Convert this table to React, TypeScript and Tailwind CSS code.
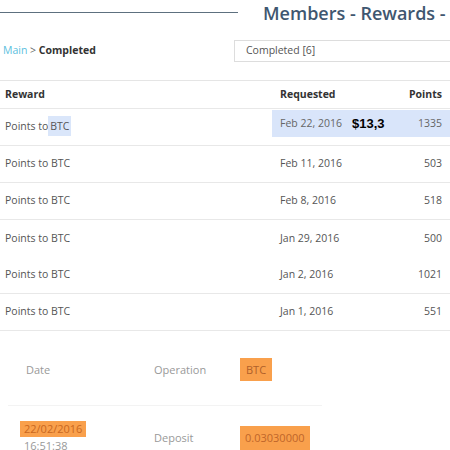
const rows = [
  { date: "Feb 22, 2016", points: "1335" },
  { date: "Feb 11, 2016", points: "503" },
  { date: "Feb 8, 2016", points: "518" },
  { date: "Jan 29, 2016", points: "500" },
  { date: "Jan 2, 2016", points: "1021" },
  { date: "Jan 1, 2016", points: "551" },
];

export default function App() {
  return (
    <div
      className="w-[450px] h-[450px] overflow-hidden bg-white text-[10.5px] text-[#555]"
      style={{ fontFamily: '"Open Sans", "Liberation Sans", sans-serif' }}
    >
      {/* Title bar */}
      <div className="flex items-center h-[25px]">
        <div className="w-[238px] h-px bg-[#5d707f] shrink-0" />
        <h1 className="ml-[25px] whitespace-nowrap text-[18px] font-semibold text-[#3f5770] leading-none">
          Members - Rewards - Completed
        </h1>
      </div>

      {/* Breadcrumb + filter */}
      <div className="flex items-center mt-[15px] h-[22px]">
        <div className="w-[234px] shrink-0 pl-[3px]">
          <span className="text-[#5bc0de]">Main</span>
          <span className="text-[#666]"> &gt; </span>
          <span className="font-bold text-[#333]">Completed</span>
        </div>
        <div className="flex-1 h-[22px] border border-[#ddd] border-r-0 flex items-center pl-[11px] text-[#555] whitespace-nowrap">
          Completed [6]
        </div>
      </div>

      {/* Rewards table */}
      <div className="mt-[18px] border-t border-[#e5e5e5]">
        <div className="flex items-center h-[28px] border-b border-[#e8e8e8] font-bold text-[#333]">
          <div className="flex-1 pl-[5px]">Reward</div>
          <div className="w-[118px] pl-[8px]">Requested</div>
          <div className="w-[60px] text-right pr-[8px]">Points</div>
        </div>
        {rows.map((r, i) => (
          <div
            key={i}
            className={
              "flex items-center h-[37px] " +
              (i === 3 ? "" : "border-b border-[#e8e8e8]")
            }
          >
            <div className="flex-1 pl-[5px]">
              Points to
              {i === 0 ? (
                <span className="bg-[#dae6fa] py-[3px] px-[2px]">BTC</span>
              ) : (
                " BTC"
              )}
            </div>
            {i === 0 ? (
              <div className="w-[178px] h-[27px] bg-[#d9e5fa] flex items-center self-start mt-px">
                <div className="w-[80px] pl-[8px] text-[#666]">{r.date}</div>
                <div
                  className="text-[13px] font-bold text-black"
                  style={{ fontFamily: '"Liberation Sans", Arial, sans-serif' }}
                >
                  $13,3
                </div>
                <div className="flex-1 text-right pr-[8px] text-[#666]">{r.points}</div>
              </div>
            ) : (
              <>
                <div className="w-[118px] pl-[8px]">{r.date}</div>
                <div className="w-[60px] text-right pr-[8px]">{r.points}</div>
              </>
            )}
          </div>
        ))}
      </div>

      {/* BTC operations */}
      <div className="mt-[11px] w-[314px] ml-[8px] text-[#999] text-[11px]">
        <div className="flex items-start h-[64px] pt-[20px] leading-[16px] border-b border-[#f3f3f3]">
          <div className="w-[146px] pl-[18px]">Date</div>
          <div className="w-[86px]">Operation</div>
          <div>
            <span className="bg-[#f9a04c] text-[#b0602a] px-[6px] py-[4px]">BTC</span>
          </div>
        </div>
        <div className="flex items-start pt-[15px]">
          <div className="w-[146px] pl-[12px] leading-[16px]">
            <span className="bg-[#f9a04c] text-[#c8671f] px-[4px] inline-block">22/02/2016</span>
            <div className="pl-[4px] mt-px text-[#999]">16:51:38</div>
          </div>
          <div className="w-[86px] pt-[9px]">Deposit</div>
          <div className="pt-[5px]">
            <span className="bg-[#f9a04c] text-[#c0662a] px-[5px] py-[4px] inline-block">
              0.03030000
            </span>
          </div>
        </div>
      </div>
    </div>
  );
}
